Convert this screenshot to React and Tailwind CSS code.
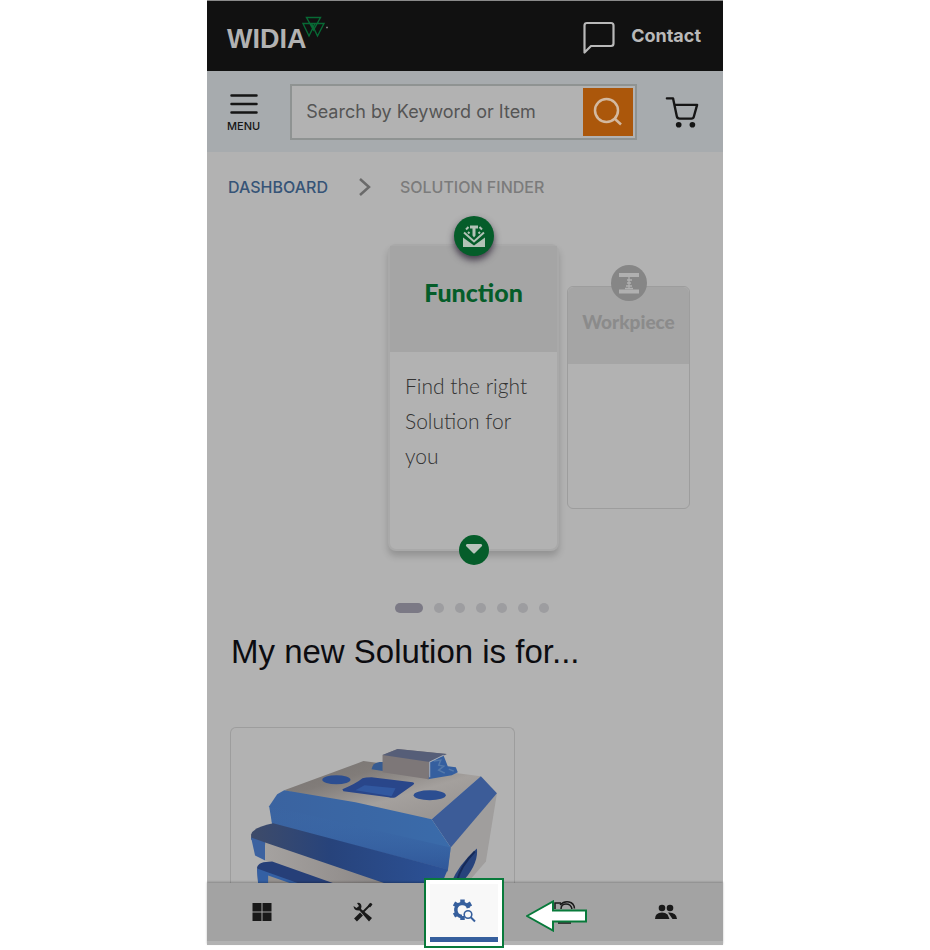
import React from "react";

const steps = [0, 1, 2, 3, 4, 5, 6];

function Logo() {
  return (
    <a href="#" className="flex h-full items-start text-[#b2b2b2]">
      <span className="mt-5 font-['Liberation_Sans',sans-serif] text-[27px] leading-9 font-bold">
        WIDIA
      </span>
      <svg className="mt-3.5 -ml-1 h-6 w-7" viewBox="0 0 28 24" fill="none" stroke="#086a35" strokeWidth="1.400">
        <path d="M4.500 2.500h14L11.500 15zM1 8.500h12L7 21zM9.500 8.500H22L15.500 21z" />
        <path d="M24 12.500h2" stroke="#777" />
      </svg>
    </a>
  );
}

function Header() {
  return (
    <header className="flex h-[70px] items-center justify-between bg-[#111111] pr-[22px] pl-5">
      <Logo />
      <a href="#" className="flex items-center gap-4 text-lg font-bold text-[#b9b9b9]">
        <svg className="mt-1 h-[34px] w-8" viewBox="0 0 32 34" fill="none" stroke="currentColor" strokeWidth="2.200" strokeLinejoin="round">
          <path d="M1.500 31.500V4.500q0-2.500 2.500-2.500h24q2.500 0 2.500 2.500v18q0 2.500-2.500 2.500H8z" />
        </svg>
        Contact
      </a>
    </header>
  );
}

function SearchBar() {
  return (
    <div className="flex h-[81px] items-center bg-[#a7abae] pr-6 pl-5">
      <button className="mt-1 flex flex-col items-center gap-1 text-[11px] leading-4 font-medium text-[#151515]">
        <svg className="h-5 w-7" viewBox="0 0 28 20" stroke="currentColor" strokeWidth="2.500" strokeLinecap="round">
          <path d="M1.500 1.500h25M1.500 10h25M1.500 18.500h25" />
        </svg>
        MENU
      </button>
      <form className="mr-7 ml-[30px] flex h-14 min-w-0 flex-1 items-center border-2 border-[#8f9392] bg-[#b2b2b2] pr-0.5 pl-3.5">
        <input
          type="text"
          aria-label="Search"
          placeholder="Search by Keyword or Item"
          className="min-w-0 flex-1 bg-transparent text-lg outline-none placeholder:text-[#555555]"
        />
        <button type="button" aria-label="Search" className="flex h-12 w-[50px] shrink-0 items-center justify-center bg-[#ab570b]">
          <svg className="h-8 w-8" viewBox="0 0 32 32" fill="none" stroke="#d3b9a0" strokeWidth="2.500">
            <circle cx="14.500" cy="14.500" r="11.500" />
            <path d="M22.500 22.500l6.500 6" />
          </svg>
        </button>
      </form>
      <button aria-label="Cart" className="shrink-0 text-[#151515]">
        <svg className="h-[34px] w-[34px]" viewBox="0 0 36 36" fill="none" stroke="currentColor" strokeWidth="2.500" strokeLinejoin="round" strokeLinecap="round">
          <path d="M2 3.500h6.500l4 19q.5 2.500 3 2.500H28q2 0 2.500-2L34 10.500H10.500" />
          <circle cx="14.500" cy="31.500" r="3" fill="currentColor" stroke="none" />
          <circle cx="29" cy="31.500" r="3" fill="currentColor" stroke="none" />
        </svg>
      </button>
    </div>
  );
}

function Breadcrumb() {
  return (
    <nav className="flex items-center px-[21px] pt-[23px] text-base">
      <a href="#" className="font-medium text-[#365477]">DASHBOARD</a>
      <svg className="mx-7 h-5 w-4" viewBox="0 0 16 20" fill="none" stroke="#6a6a6a" strokeWidth="2.500">
        <path d="M4 2l9 8-9 8" />
      </svg>
      <span className="font-medium text-[#7b7b7b]">SOLUTION FINDER</span>
    </nav>
  );
}

function FunctionIcon() {
  return (
    <svg className="h-6 w-6" viewBox="0 0 24 24">
      <path d="M1 13.500l11 8 11-8V23H1z" fill="#b2c2b6" />
      <path d="M2 8.500l10 9 10-9" fill="none" stroke="#055d2a" strokeWidth="5" />
      <path d="M2 8.500l10 9 10-9M4 5.500L6.500 3M20 5.500L17.500 3M6 8l1.500 1.500M18 8l-1.500 1.500" fill="none" stroke="#b2c2b6" strokeWidth="2" />
      <path d="M8 1.500h8v3h-2.500v7L12 13.500l-1.500-2v-7H8z" fill="#b2c2b6" />
    </svg>
  );
}

function WorkpieceIcon() {
  return (
    <svg className="h-6 w-6" viewBox="0 0 24 24" fill="#b0b0b0">
      <path d="M2 2h20v4H2zM2 18.500h20v4H2z" />
      <path d="M12 6v3M10 9h5M10 12h4M9 15h6M8 17.500h8M12 9v9" stroke="#b0b0b0" strokeWidth="1.300" />
    </svg>
  );
}

function Cards() {
  return (
    <div className="flex items-start gap-2 pt-[45px] pl-[181px] font-['Lato',sans-serif]">
      <div className="relative flex h-[307px] w-[171px] flex-col rounded-lg border-2 border-[#a9a9a9] bg-[#b2b2b2] shadow-[0_5px_7px_rgba(0,0,0,0.18)]">
        <div className="flex h-[106px] items-center justify-center bg-[#a5a5a5] pb-3.5">
          <h2 className="text-[25px] leading-8 font-black text-[#055d2a]">Function</h2>
        </div>
        <p className="px-[15px] pt-4 text-[21px] leading-[35px] font-light text-[#333333]">
          Find the right Solution for you
        </p>
        <div className="absolute -top-[30px] left-1/2 flex h-10 w-10 -translate-x-1/2 items-center justify-center rounded-full bg-[#055d2a] shadow-[0_4px_7px_rgba(40,30,50,0.8)]">
          <FunctionIcon />
        </div>
        <button aria-label="Expand" className="absolute -bottom-4 left-1/2 flex h-[30px] w-[30px] -translate-x-1/2 items-center justify-center rounded-full bg-[#055d2a]">
          <svg className="h-5 w-5" viewBox="0 0 20 20" fill="#b9c4bc">
            <path d="M3 4h14q2 1 .5 2.500L11 13q-1 1-2 0L2.500 6.500Q1 5 3 4z" />
          </svg>
        </button>
      </div>
      <div className="relative mt-[42px] h-[223px] w-[123px] rounded-md border border-[#9d9d9d]">
        <div className="flex h-[77px] items-center justify-center rounded-t-md bg-[#a5a5a5] pb-2">
          <h2 className="text-[19px] leading-6 font-black text-[#8b8b8b]">Workpiece</h2>
        </div>
        <div className="absolute -top-[22px] left-1/2 flex h-9 w-9 -translate-x-1/2 items-center justify-center rounded-full bg-[#868686]">
          <WorkpieceIcon />
        </div>
      </div>
    </div>
  );
}

function Dots() {
  return (
    <div className="mt-[52px] flex items-center gap-[11px] pl-[188px]">
      {steps.map((s) => (
        <span
          key={s}
          className={s === 0 ? "h-2.5 w-7 rounded-full bg-[#7b7985]" : "h-2.5 w-2.5 rounded-full bg-[#9d9da0]"}
        />
      ))}
    </div>
  );
}

function Fixture() {
  return (
    <svg className="block h-[155px] w-full" viewBox="231 728 282 155" preserveAspectRatio="xMidYMin slice">
      <defs>
        <linearGradient id="top" x1="0" x2="1" y1="0" y2="1">
          <stop offset="0" stopColor="#777371" />
          <stop offset="0.300" stopColor="#817c79" />
          <stop offset="0.600" stopColor="#a4a09d" />
          <stop offset="1" stopColor="#94908e" />
        </linearGradient>
        <linearGradient id="face" x1="0" x2="1">
          <stop offset="0" stopColor="#3a63a0" />
          <stop offset="1" stopColor="#3a6baa" />
        </linearGradient>
        <linearGradient id="faceShade" x1="0" x2="0" y1="0" y2="1">
          <stop offset="0" stopColor="#3f6fae" stopOpacity="0" />
          <stop offset="1" stopColor="#2d5194" />
        </linearGradient>
        <linearGradient id="ledge" x1="0" x2="1">
          <stop offset="0" stopColor="#3e4b69" />
          <stop offset="0.400" stopColor="#27437b" />
          <stop offset="1" stopColor="#2c5297" />
        </linearGradient>
        <linearGradient id="steel" x1="0" x2="1">
          <stop offset="0" stopColor="#a5a2a0" />
          <stop offset="0.500" stopColor="#989492" />
          <stop offset="1" stopColor="#8a8685" />
        </linearGradient>
      </defs>
      <path d="M448 846L496 793 485 861 466 883H440z" fill="#a09e9d" />
      <path d="M284 790L363 761 480 776 431 819 355 808z" fill="url(#top)" />
      <path d="M431 819L480 776 496 793 450 847z" fill="#3c5c98" />
      <path d="M284 790L355 802 431 819 450 847 447 869 272 824 269 806 277 794z" fill="url(#face)" />
      <path d="M271 806l179 41-3 24-176-49z" fill="url(#faceShade)" opacity="0.800" />
      <path d="M251 834q2-7 22-11l174 46-6 14h-62L265 844l-14-5z" fill="url(#ledge)" />
      <path d="M251 837l14 5v18l-10-5z" fill="#3c62a0" />
      <path d="M265 842l120 41h-60l-60-23z" fill="url(#steel)" />
      <path d="M257 867q1-6 15-6l62 22h-76z" fill="#263f78" />
      <path d="M257 868l42 15h-41z" fill="#3460a4" />
      <path d="M268 875l23 8h-23z" fill="#96928f" />
      <path d="M476 848q2 16-16 35h-10q7-18 26-35z" fill="#27437c" />
      <path d="M474 851q-14 14-18 30" fill="none" stroke="#162a58" strokeWidth="2" />
      <ellipse cx="336" cy="779.500" rx="14" ry="4.500" fill="#2c4e91" />
      <ellipse cx="429" cy="795" rx="16" ry="5" fill="#2c4e91" />
      <path d="M342 789q14-6 20-11 3-1 9-1l41 5q3 1 0 3l-17 12q-3 1-7 0l-45-6z" fill="#29468a" />
      <path d="M355 790l9-5 31 3-4 8z" fill="#3158a0" />
      <path d="M371 769q1-6 8-7h5v9z" fill="#365b91" />
      <path d="M427 758l16-2 4 10 8 1 2 5-6 3-24 4z" fill="#355f9f" />
      <path d="M433 761l7-1-2 5 5 1-5 4 6 3M448 769l5 2" fill="none" stroke="#5479aa" strokeWidth="1.500" />
      <path d="M382 755l15-6 49 5-17 8-1 17-46-7z" fill="#7d7778" />
      <path d="M382 755l15-6 49 5-17 8z" fill="#565e78" />
      <path d="M429 777v-15l14-7" fill="none" stroke="#a7b0bd" strokeWidth="1" />
    </svg>
  );
}

function BottomNav() {
  return (
    <nav className="relative border-b-4 border-[#b2b2b2] bg-[#a3a3a3] pr-1.5 pl-1 shadow-[0_-1px_2px_rgba(0,0,0,0.25)]">
      <div className="grid h-[58px] grid-cols-5 place-items-center text-[#191919]">
        <a href="#" aria-label="Dashboard">
          <svg className="h-5 w-5" viewBox="0 0 20 20" fill="currentColor">
            <path d="M.500 1h9v8.500h-9zM10.500 1h9v8.500h-9zM.500 10.500h9V19h-9zM10.500 10.500h9V19h-9z" />
          </svg>
        </a>
        <a href="#" aria-label="Tools">
          <svg className="h-5 w-5" viewBox="0 0 20 20" fill="none" stroke="currentColor">
            <path d="M4 1Q8 0 8.500 4.500L8 7l11 9-3 3.500L6.500 8.500Q1 9 .500 4l3 2L6 4z" fill="currentColor" stroke="none" />
            <path d="M18.500 1.500L10 10" strokeWidth="2" />
            <path d="M17 1l2.500 1.500-2.500 3-2-2z" fill="currentColor" stroke="none" />
            <path d="M8.500 12L2.500 18" strokeWidth="4" />
          </svg>
        </a>
        <div className="relative">
          <a
            href="#"
            aria-label="Solution finder"
            className="absolute -top-[34px] -left-10 flex h-[70px] w-20 border-2 border-[#087a3b] bg-white p-1"
          >
            <span className="flex flex-1 items-center justify-center border-b-[5px] border-[#365f9d] bg-[#f8f8f8] text-[#365f9d]">
              <svg className="h-6 w-6" viewBox="0 0 24 24" fill="none" stroke="currentColor">
                <path d="M16.500 9A6.500 6.500 0 1 0 10 17.500" strokeWidth="3.500" />
                <path d="M10.500 4V.500M5.500 6.500L2 4.500M5.500 14.500L2 16.500M10.500 17v4M15.500 6.500l3.500-2" strokeWidth="4.500" />
                <circle cx="16" cy="15.500" r="3.800" strokeWidth="1.600" fill="#f8f8f8" />
                <path d="M18.500 18l4.500 4.500" strokeWidth="2" />
              </svg>
            </span>
          </a>
        </div>
        <a href="#" aria-label="Catalog" className="relative">
          <svg className="h-6 w-6" viewBox="0 0 24 24" fill="none" stroke="currentColor" strokeWidth="1.500">
            <path d="M2 9V3h6M5 23h13M7 5q4-4 9-3 5 1 5.500 6.500" />
            <path d="M8 9q0-5 5-5t6 5" />
          </svg>
          <svg className="absolute top-0 -left-[27px] h-8 w-16" viewBox="0 0 64 32" fill="white" stroke="#087a3b" strokeWidth="2">
            <path d="M1 16L27 1.500v9h33v11H27v9z" />
          </svg>
        </a>
        <a href="#" aria-label="Team">
          <svg className="h-4 w-6" viewBox="0 0 24 16" fill="currentColor">
            <circle cx="8" cy="4" r="3.300" />
            <circle cx="16" cy="4" r="3.300" />
            <path d="M1 15q0-6.500 7-6.500 3.500 0 5.500 2l2 4.500z" />
            <path d="M14 8.500q8.500-.500 9 6.500h-4.500z" />
          </svg>
        </a>
      </div>
    </nav>
  );
}

export default function App() {
  return (
    <div className="min-h-screen bg-white font-['Inter',sans-serif]">
      <div className="mx-auto w-full max-w-[516px] border-t border-[#8a8a8a] bg-[#b2b2b2]">
        <Header />
        <SearchBar />
        <main>
          <Breadcrumb />
          <Cards />
          <Dots />
          <h1 className="mt-[17px] px-6 font-['Liberation_Sans',sans-serif] text-[33px] leading-[44px] text-[#0c0c10]">
            My new Solution is for...
          </h1>
          <div className="mt-[53px] ml-[23px] w-[285px] max-w-full overflow-hidden rounded-t-md border border-b-0 border-[#9d9d9d]">
            <Fixture />
          </div>
        </main>
        <BottomNav />
      </div>
    </div>
  );
}
